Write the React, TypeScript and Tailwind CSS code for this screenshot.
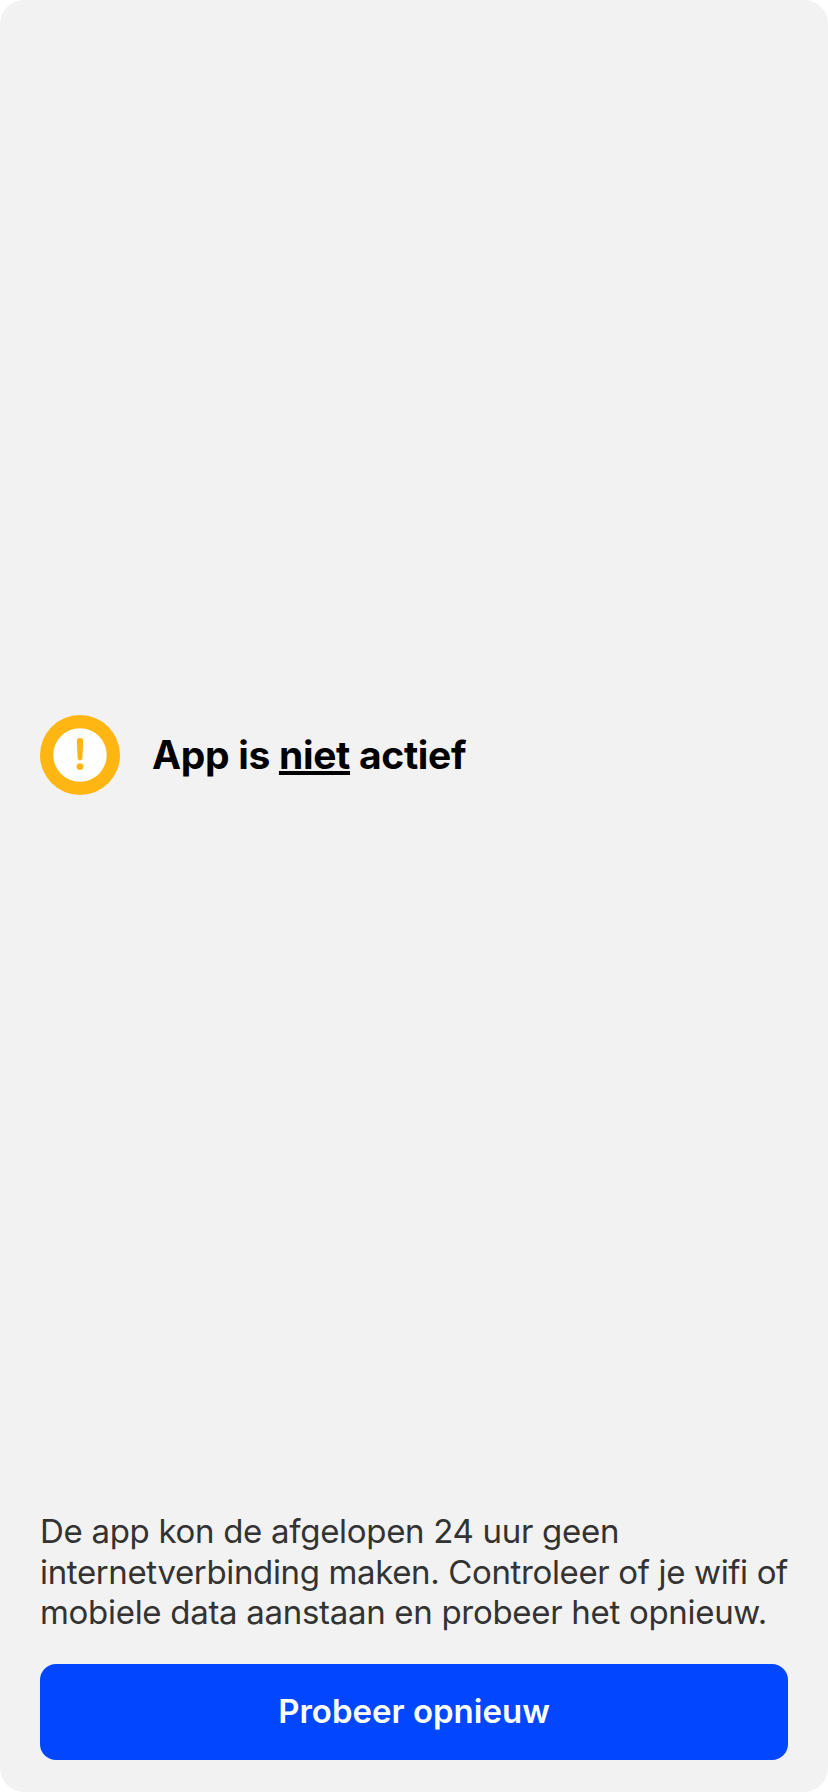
export default function App() {
  return (
    <div className="h-[1792px] w-[828px] bg-white font-['Inter',sans-serif]">
      <main className="flex h-full flex-col rounded-[24px] bg-[#f2f2f2] px-10 pb-8">
        <section className="flex flex-1 items-center gap-8 pb-0.5">
          <svg className="size-20 shrink-0" viewBox="0 0 80 80" aria-hidden="true">
            <circle cx="40" cy="40" r="40" fill="#ffb612" />
            <circle cx="40" cy="40" r="26.7" fill="#fff" />
            <path d="M36.8 26.2a3.2 3.2 0 0 1 6.4 0L42.4 43a2.4 2.4 0 0 1-4.8 0Z" fill="#ffb612" />
            <circle cx="40" cy="51.6" r="3.4" fill="#ffb612" />
          </svg>
          <h1 className="pt-0.5 text-[39px] font-bold tracking-[-0.32px] text-black">
            App is{' '}
            <span className="underline decoration-4 underline-offset-2 [text-decoration-skip-ink:none]">niet</span>{' '}
            actief
          </h1>
        </section>
        <p className="mb-[31px] whitespace-nowrap text-[33px] leading-[40.6px] tracking-[-0.3px] text-[#333]">
          De app kon de afgelopen 24 uur geen<br />
          <span className="tracking-[-0.36px]">internetverbinding maken. Controleer of je wifi of</span><br />
          mobiele data aanstaan en probeer het opnieuw.
        </p>
        <button className="h-24 shrink-0 rounded-2xl bg-[#0047ff] text-[33px] font-semibold text-white">
          Probeer opnieuw
        </button>
      </main>
    </div>
  );
}
